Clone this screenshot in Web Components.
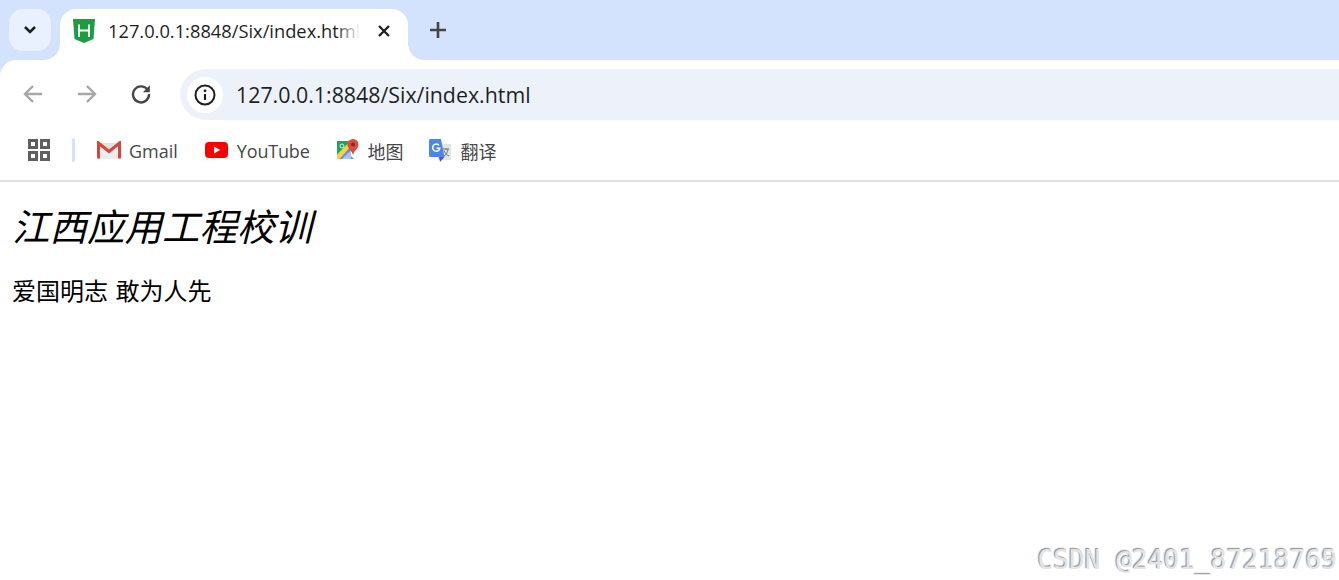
<!DOCTYPE html>
<html lang="zh">
<head>
<meta charset="utf-8">
<title>index</title>
<style>
  html, body { margin: 0; height: 100%; background: #fff; overflow: hidden; }
  body { font-family: "Open Sans", "Noto Sans CJK SC", sans-serif; display: flex; flex-direction: column; height: 580px; position: relative; }
</style>
</head>
<body>
<tab-strip>
  <browser-tab title-text="127.0.0.1:8848/Six/index.html"></browser-tab>
</tab-strip>
<nav-bar url="127.0.0.1:8848/Six/index.html"></nav-bar>
<bookmark-bar>
  <bookmark-item icon="gmail" label="Gmail" style="--gap: 8px; margin-right: 27px"></bookmark-item>
  <bookmark-item icon="youtube" label="YouTube" style="--track: -0.01em; margin-right: 27px"></bookmark-item>
  <bookmark-item icon="maps" label="地图" style="margin-right: 25px"></bookmark-item>
  <bookmark-item icon="translate" label="翻译" style="--gap: 10px"></bookmark-item>
</bookmark-bar>
<page-view>
  <h1 slot="title">江西应用工程校训</h1>
  <p slot="motto">爱国明志 敢为人先</p>
</page-view>
<water-mark text="CSDN @2401_87218769" over="CSDN @2401_87213765"></water-mark>

<script>
const ICONS = {
  chevron: '<svg width="14" height="10" viewBox="0 0 14 10"><path d="M2 2l5 5 5-5" fill="none" stroke="#1f1f1f" stroke-width="2.6"/></svg>',
  favicon: '<svg width="22" height="24" viewBox="0 0 22 24"><path d="M0 0H22L20.500 20 11 24 1.500 20Z" fill="#1b9e3e"/><path d="M6 5.500V18M16 5.500V18M6 11.500H16" fill="none" stroke="#fff" stroke-width="2"/></svg>',
  close: '<svg width="14" height="14" viewBox="0 0 14 14"><path d="M2 2l10 10M12 2L2 12" stroke="#1f1f1f" stroke-width="2.300"/></svg>',
  plus: '<svg width="16" height="16" viewBox="0 0 16 16"><path d="M8 0v16M0 8h16" stroke="#444" stroke-width="2.600"/></svg>',
  back: '<svg width="20" height="20" viewBox="0 0 20 20"><path d="M19 10H2.500M10 2l-8 8 8 8" fill="none" stroke="#a6a6a6" stroke-width="2.400"/></svg>',
  forward: '<svg width="20" height="20" viewBox="0 0 20 20"><path d="M1 10h16.500M10 2l8 8-8 8" fill="none" stroke="#a6a6a6" stroke-width="2.400"/></svg>',
  reload: '<svg width="20" height="20" viewBox="0 0 20 20"><path d="M17 6.500A8 8 0 1 0 18 10" fill="none" stroke="#474747" stroke-width="2.400"/><path d="M18.800 1.200V8.200H11.800Z" fill="#474747"/></svg>',
  info: '<svg width="22" height="22" viewBox="0 0 22 22"><circle cx="11" cy="11" r="9.500" fill="none" stroke="#1f1f1f" stroke-width="2"/><path d="M11 10v6" stroke="#1f1f1f" stroke-width="2.200"/><circle cx="11" cy="6.800" r="1.400" fill="#1f1f1f"/></svg>',
  apps: '<svg width="22" height="22" viewBox="0 0 22 22"><g fill="none" stroke="#5f5f5f" stroke-width="3"><rect x="1.500" y="1.500" width="7" height="7"/><rect x="13.500" y="1.500" width="7" height="7"/><rect x="1.500" y="13.500" width="7" height="7"/><rect x="13.500" y="13.500" width="7" height="7"/></g></svg>',
  gmail: '<svg width="24" height="18" viewBox="0 0 24 18"><path d="M2 2H22V18H2Z" fill="#ececec"/><path d="M2 2L12 10 22 2" fill="#e2e2e2"/><path d="M1.500 17.500V2L12 10.500 22.500 2V17.500" fill="none" stroke="#d4473c" stroke-width="3"/></svg>',
  youtube: '<svg width="23" height="16" viewBox="0 0 23 16"><rect width="23" height="16" rx="4" fill="#f00"/><path d="M9 4.500v7l6.200-3.500Z" fill="#fff"/></svg>',
  maps: '<svg width="22" height="22" viewBox="0 0 22 22"><path d="M0 2H14V20H0Z" fill="#1fa463"/><path d="M0 20L14 6V20Z" fill="#4b8df0"/><path d="M0 20L8.500 11.500 17 20Z" fill="#5a95f5"/><path d="M0 15.500L12 3.500 15 6 2.500 20H0Z" fill="#fbd13e"/><path d="M14 20H5L14 11Z" fill="#e4e4e4" opacity=".6"/><path d="M16 0a5.500 5.500 0 0 1 5.500 5.500C21.500 9.500 17.500 11 16 16 14.500 11 10.500 9.500 10.500 5.500A5.500 5.500 0 0 1 16 0Z" fill="#dd4b3e"/><circle cx="16" cy="5.500" r="1.900" fill="#802d27"/><circle cx="5" cy="7" r="2" fill="none" stroke="#d5f0dd" stroke-width="1"/></svg>',
  translate: '<svg width="22" height="23" viewBox="0 0 22 23"><path d="M9 5H22V21H9Z" fill="#e4e4e4"/><path d="M14 10h6M17 9v1.500M15 17c2.500-1.500 3.500-3.500 4-7M15 11.500c1 2.500 2.500 4.500 5 5.500" fill="none" stroke="#707070" stroke-width="1"/><path d="M1.500 0H12L15.500 18H1.500A1.500 1.500 0 0 1 0 16.500V1.500A1.500 1.500 0 0 1 1.500 0Z" fill="#4a86ec"/><path d="M10 18h5.500L11 23Z" fill="#3a5fc4"/><path d="M10 6.300A3.600 3.600 0 1 0 10.800 9.300H7.500" fill="none" stroke="#fff" stroke-width="1.500"/></svg>'
};

class TabStrip extends HTMLElement {
  constructor() {
    super();
    const shadowRoot = this.attachShadow({ mode: 'open' });
    shadowRoot.innerHTML = `
      <style>
        :host { display: flex; align-items: flex-end; height: 60px; background: #d3e3fd; padding-left: 9px; box-sizing: border-box; flex: none; }
        .menu { width: 42px; height: 42px; border-radius: 14px; background: #e9f0fe; display: flex; align-items: center; justify-content: center; align-self: flex-start; margin-top: 9px; }
        .plus { display: flex; align-self: flex-start; margin: 22px 0 0 22px; }
        ::slotted(browser-tab) { margin-left: 9px; }
      </style>
      <div class="menu">${ICONS.chevron}</div>
      <slot></slot>
      <div class="plus">${ICONS.plus}</div>`;
  }
}
customElements.define('tab-strip', TabStrip);

class BrowserTab extends HTMLElement {
  constructor() {
    super();
    const shadowRoot = this.attachShadow({ mode: 'open' });
    shadowRoot.innerHTML = `
      <style>
        :host { display: flex; align-items: center; position: relative; width: 348px; height: 51px; box-sizing: border-box; padding: 0 0 0 13px; background: #fff; border-radius: 16px 16px 0 0; }
        :host::before, :host::after { content: ""; position: absolute; bottom: 0; width: 16px; height: 16px; }
        :host::before { left: -16px; background: radial-gradient(circle at 0 0, transparent 15.500px, #fff 16px); }
        :host::after { right: -16px; background: radial-gradient(circle at 100% 0, transparent 15.500px, #fff 16px); }
        .fav { display: flex; margin: 0 13px 0 0; position: relative; top: -4px; }
        .text { width: 252px; white-space: nowrap; font-size: 18.300px; color: #1f1f1f; position: relative; top: -4px; }
        .text::after { content: ""; position: absolute; right: 0; top: 0; bottom: 0; width: 24px; background: linear-gradient(to right, rgba(255,255,255,0), #fff); }
        .close { display: flex; margin-left: 17px; position: relative; top: -4px; }
      </style>
      <span class="fav">${ICONS.favicon}</span>
      <span class="text">${this.getAttribute('title-text')}</span>
      <span class="close">${ICONS.close}</span>`;
  }
}
customElements.define('browser-tab', BrowserTab);

class NavBar extends HTMLElement {
  constructor() {
    super();
    const shadowRoot = this.attachShadow({ mode: 'open' });
    shadowRoot.innerHTML = `
      <style>
        :host { display: block; background: #d3e3fd; flex: none; }
        .bar { display: flex; align-items: flex-start; height: 60px; background: #fff; border-radius: 16px 0 0 0; box-sizing: border-box; padding: 9px 0 0 23px; }
        .btn { display: flex; width: 20px; height: 20px; margin: 15px 34px 0 0; }
        .address { display: flex; align-items: center; flex: 1; height: 51px; margin: 0 -40px 0 -5px; padding-left: 7px; border-radius: 26px; background: #edf2fa; }
        .info { width: 36px; height: 36px; border-radius: 50%; background: #fff; display: flex; align-items: center; justify-content: center; margin-right: 13px; }
        .url { font-size: 21.350px; color: #1f1f1f; white-space: nowrap; }
      </style>
      <div class="bar">
        <span class="btn">${ICONS.back}</span>
        <span class="btn">${ICONS.forward}</span>
        <span class="btn">${ICONS.reload}</span>
        <div class="address">
          <span class="info">${ICONS.info}</span>
          <span class="url">${this.getAttribute('url')}</span>
        </div>
      </div>`;
  }
}
customElements.define('nav-bar', NavBar);

class BookmarkBar extends HTMLElement {
  constructor() {
    super();
    const shadowRoot = this.attachShadow({ mode: 'open' });
    shadowRoot.innerHTML = `
      <style>
        :host { display: flex; align-items: center; height: 62px; box-sizing: border-box; padding: 0 0 0 28px; background: #fff; border-bottom: 2px solid #e0e0e0; flex: none; }
        .apps { display: flex; }
        .sep { width: 3px; height: 24px; background: #d3e3fd; border-radius: 2px; margin: 0 22px 0 22px; }
        ::slotted(bookmark-item) { margin-right: 26px; }
      </style>
      <span class="apps">${ICONS.apps}</span>
      <span class="sep"></span>
      <slot></slot>`;
  }
}
customElements.define('bookmark-bar', BookmarkBar);

class BookmarkItem extends HTMLElement {
  constructor() {
    super();
    const shadowRoot = this.attachShadow({ mode: 'open' });
    shadowRoot.innerHTML = `
      <style>
        :host { display: inline-flex; align-items: center; gap: var(--gap, 9px); font-size: 18px; color: #474747; letter-spacing: var(--track, 0); }
        span { display: flex; }
        label { padding-top: 2px; }
      </style>
      <span>${ICONS[this.getAttribute('icon')]}</span>
      <label>${this.getAttribute('label')}</label>`;
  }
}
customElements.define('bookmark-item', BookmarkItem);

class PageView extends HTMLElement {
  constructor() {
    super();
    const shadowRoot = this.attachShadow({ mode: 'open' });
    shadowRoot.innerHTML = `
      <style>
        :host { display: block; flex: 1; padding: 0 12px; color: #000; font-family: "Noto Sans CJK SC", sans-serif; }
        ::slotted(h1) { font-size: 37.500px; font-weight: 400; font-style: italic; line-height: 50px; margin: 18px 0 0; }
        ::slotted(p) { font-size: 24px; font-weight: 400; line-height: 32px; margin: 24px 0 0; word-spacing: 2px; }
      </style>
      <slot name="title"></slot>
      <slot name="motto"></slot>`;
  }
}
customElements.define('page-view', PageView);

class WaterMark extends HTMLElement {
  constructor() {
    super();
    const shadowRoot = this.attachShadow({ mode: 'open' });
    shadowRoot.innerHTML = `
      <style>
        :host { position: absolute; right: 2px; bottom: 5px; font: 26.200px/30px "DejaVu Sans Mono", monospace; color: #e4e4e4; text-shadow: -1px -1px 1px #999, 1px 1px 1px #fff; white-space: nowrap; }
        .over { position: absolute; left: 0; top: 0; opacity: .6; }
      </style>
      <span>${this.getAttribute('text')}</span>
      <span class="over">${this.getAttribute('over')}</span>`;
  }
}
customElements.define('water-mark', WaterMark);
</script>
</body>
</html>
